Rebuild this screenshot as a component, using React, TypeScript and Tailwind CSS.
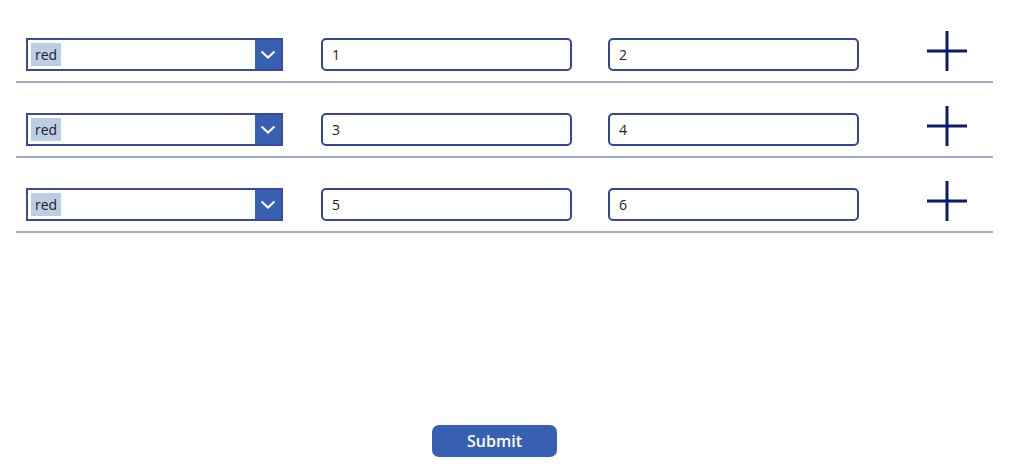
import React from 'react';

interface Row {
  color: string;
  a: string;
  b: string;
}

const rows: Row[] = [
  { color: 'red', a: '1', b: '2' },
  { color: 'red', a: '3', b: '4' },
  { color: 'red', a: '5', b: '6' },
];

const Chevron = () => (
  <svg width="16" height="9" viewBox="0 0 16 9" fill="none">
    <path d="M1.5 1.5 L8 7.5 L14.5 1.5" stroke="white" strokeWidth="2.2" />
  </svg>
);

const Plus = () => (
  <svg width="42" height="42" viewBox="0 0 42 42">
    <path d="M21 1 V41 M1 21 H41" stroke="#0b1a6e" strokeWidth="3" />
  </svg>
);

export default function App() {
  return (
    <div
      className="w-[1024px] h-[473px] bg-white text-[#222] overflow-hidden"
      style={{ fontFamily: '"Open Sans", "Noto Sans", sans-serif' }}
    >
      <div className="pt-[38px]">
        {rows.map((r, i) => (
          <div key={i} className={i > 0 ? 'mt-[30px]' : ''}>
            <div className="flex items-center h-[33px] pl-[26px]">
              {/* dropdown */}
              <div className="w-[257px] h-[33px] flex border-2 border-[#3c4a9c] bg-white">
                <div className="flex-1 flex items-center pl-[3px]">
                  <span className="bg-[#bccde4] h-[23px] px-[4px] flex items-center text-[14px] leading-none">
                    {r.color}
                  </span>
                </div>
                <div className="w-[26px] h-full bg-[#3860b2] flex items-center justify-center">
                  <Chevron />
                </div>
              </div>
              {/* text inputs */}
              <div className="ml-[38px] w-[251px] h-[33px] border-2 border-[#34459a] rounded-[5px] flex items-center pl-[9px] text-[14px]">
                {r.a}
              </div>
              <div className="ml-[36px] w-[251px] h-[33px] border-2 border-[#34459a] rounded-[5px] flex items-center pl-[9px] text-[14px]">
                {r.b}
              </div>
              <div className="ml-[67px] mb-[7px] flex items-center justify-center">
                <Plus />
              </div>
            </div>
            <div className="mt-[10px] ml-[16px] w-[977px] h-[2px] bg-[#a3aad2]" />
          </div>
        ))}
      </div>
      <div className="mt-[192px] ml-[432px]">
        <button className="w-[125px] h-[32px] rounded-[7px] bg-[#3860b2] text-white text-[16px] font-semibold flex items-center justify-center">
          Submit
        </button>
      </div>
    </div>
  );
}
